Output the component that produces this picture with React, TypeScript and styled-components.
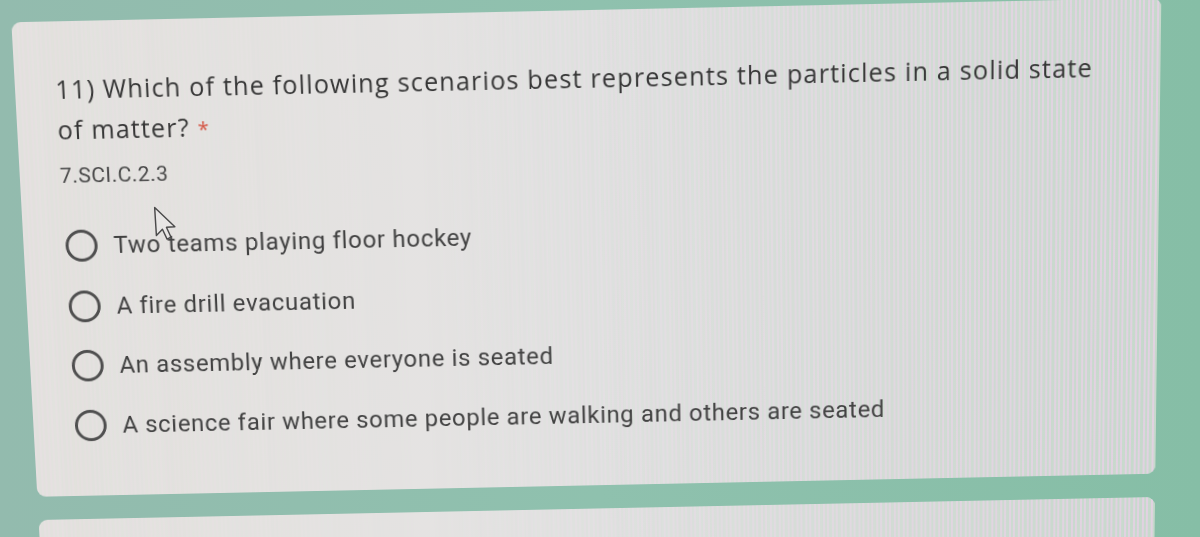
import React from 'react';
import styled, { createGlobalStyle } from 'styled-components';

const GlobalStyle = createGlobalStyle`
  html, body {
    margin: 0;
    padding: 0;
    background: #8fbfad;
    overflow: hidden;
  }
`;

const Stage = styled.div`
  position: relative;
  width: 1200px;
  height: 537px;
  overflow: hidden;
  background: linear-gradient(90deg, #93bbae 0%, #8fc1ae 50%, #86bea6 100%);
`;

const Sheet = styled.div`
  display: flex;
  flex-direction: column;
  gap: 24px;
  width: 1200px;
  box-sizing: border-box;
  padding: 13px 0 0 24px;
  transform-origin: 592px 251px;
  transform: perspective(1000px) rotateX(-3.4deg) rotate(-1.2deg);
`;

const Card = styled.div<{ $height: number }>`
  position: relative;
  width: 1134px;
  height: ${p => p.$height}px;
  box-sizing: border-box;
  padding: 46px 40px 0;
  border-radius: 9px;
  background: linear-gradient(90deg, #e6e3e0 0%, #e4e3e3 50%, #dcdcdb 100%);
  overflow: hidden;

  &::after {
    content: '';
    position: absolute;
    inset: 0;
    background: repeating-linear-gradient(
      90deg,
      rgba(226, 208, 226, 0.9) 0px,
      rgba(226, 208, 226, 0.9) 2px,
      rgba(196, 216, 202, 0.9) 2px,
      rgba(196, 216, 202, 0.9) 4.5px
    );
    -webkit-mask-image: linear-gradient(90deg, rgba(0, 0, 0, 0.15) 0%, transparent 35%, rgba(0, 0, 0, 0.5) 75%, #000 100%);
    mask-image: linear-gradient(90deg, rgba(0, 0, 0, 0.15) 0%, transparent 35%, rgba(0, 0, 0, 0.5) 75%, #000 100%);
    pointer-events: none;
  }
`;

const Content = styled.div`
  position: relative;
  z-index: 1;
`;

const Title = styled.div`
  font-family: 'Open Sans', Lato, sans-serif;
  font-size: 25px;
  line-height: 40px;
  color: #363636;
  letter-spacing: 1.15px;
  white-space: nowrap;
`;

const Required = styled.span`
  color: #d4503f;
  margin-left: 8px;
  font-size: 20px;
`;

const Code = styled.div`
  margin-top: 11px;
  font-family: Roboto, 'Liberation Sans', sans-serif;
  font-size: 21px;
  line-height: 24px;
  letter-spacing: 0.45px;
  color: #4a4a4a;
`;

const Options = styled.div`
  margin-top: 28px;
  display: flex;
  flex-direction: column;
`;

const Option = styled.label`
  display: flex;
  align-items: center;
  gap: 16px;
  height: 60.5px;
  padding-left: 2px;
  font-family: Roboto, 'Liberation Sans', sans-serif;
  font-size: 24px;
  letter-spacing: 0.7px;
  color: #424242;
`;

const Radio = styled.span`
  flex: none;
  width: 32px;
  height: 32px;
  box-sizing: border-box;
  border: 3px solid #4f4f4f;
  border-radius: 50%;
`;

const Cursor = styled.svg`
  position: absolute;
  left: 152px;
  top: 206px;
`;

const options = [
  'Two teams playing floor hockey',
  'A fire drill evacuation',
  'An assembly where everyone is seated',
  'A science fair where some people are walking and others are seated',
];

export default function App() {
  return (
    <Stage>
      <GlobalStyle />
      <Sheet>
        <Card $height={476}>
          <Content>
            <Title>
              11) Which of the following scenarios best represents the particles in a solid state
              <br />
              of matter?<Required>*</Required>
            </Title>
            <Code>7.SCI.C.2.3</Code>
            <Options>
              {options.map(o => (
                <Option key={o}>
                  <Radio />
                  {o}
                </Option>
              ))}
            </Options>
          </Content>
        </Card>
        <Card $height={200} />
      </Sheet>
      <Cursor width="26" height="35" viewBox="0 0 16 22">
        <path
          d="M1.5 1 L2.6 18.6 L6.4 14.6 L9.3 20.8 L11.8 19.6 L8.9 13.4 L14.2 13 Z"
          fill="rgba(240,240,240,0.35)"
          stroke="#4a4a4a"
          strokeWidth="0.9"
          strokeLinejoin="round"
        />
      </Cursor>
    </Stage>
  );
}
